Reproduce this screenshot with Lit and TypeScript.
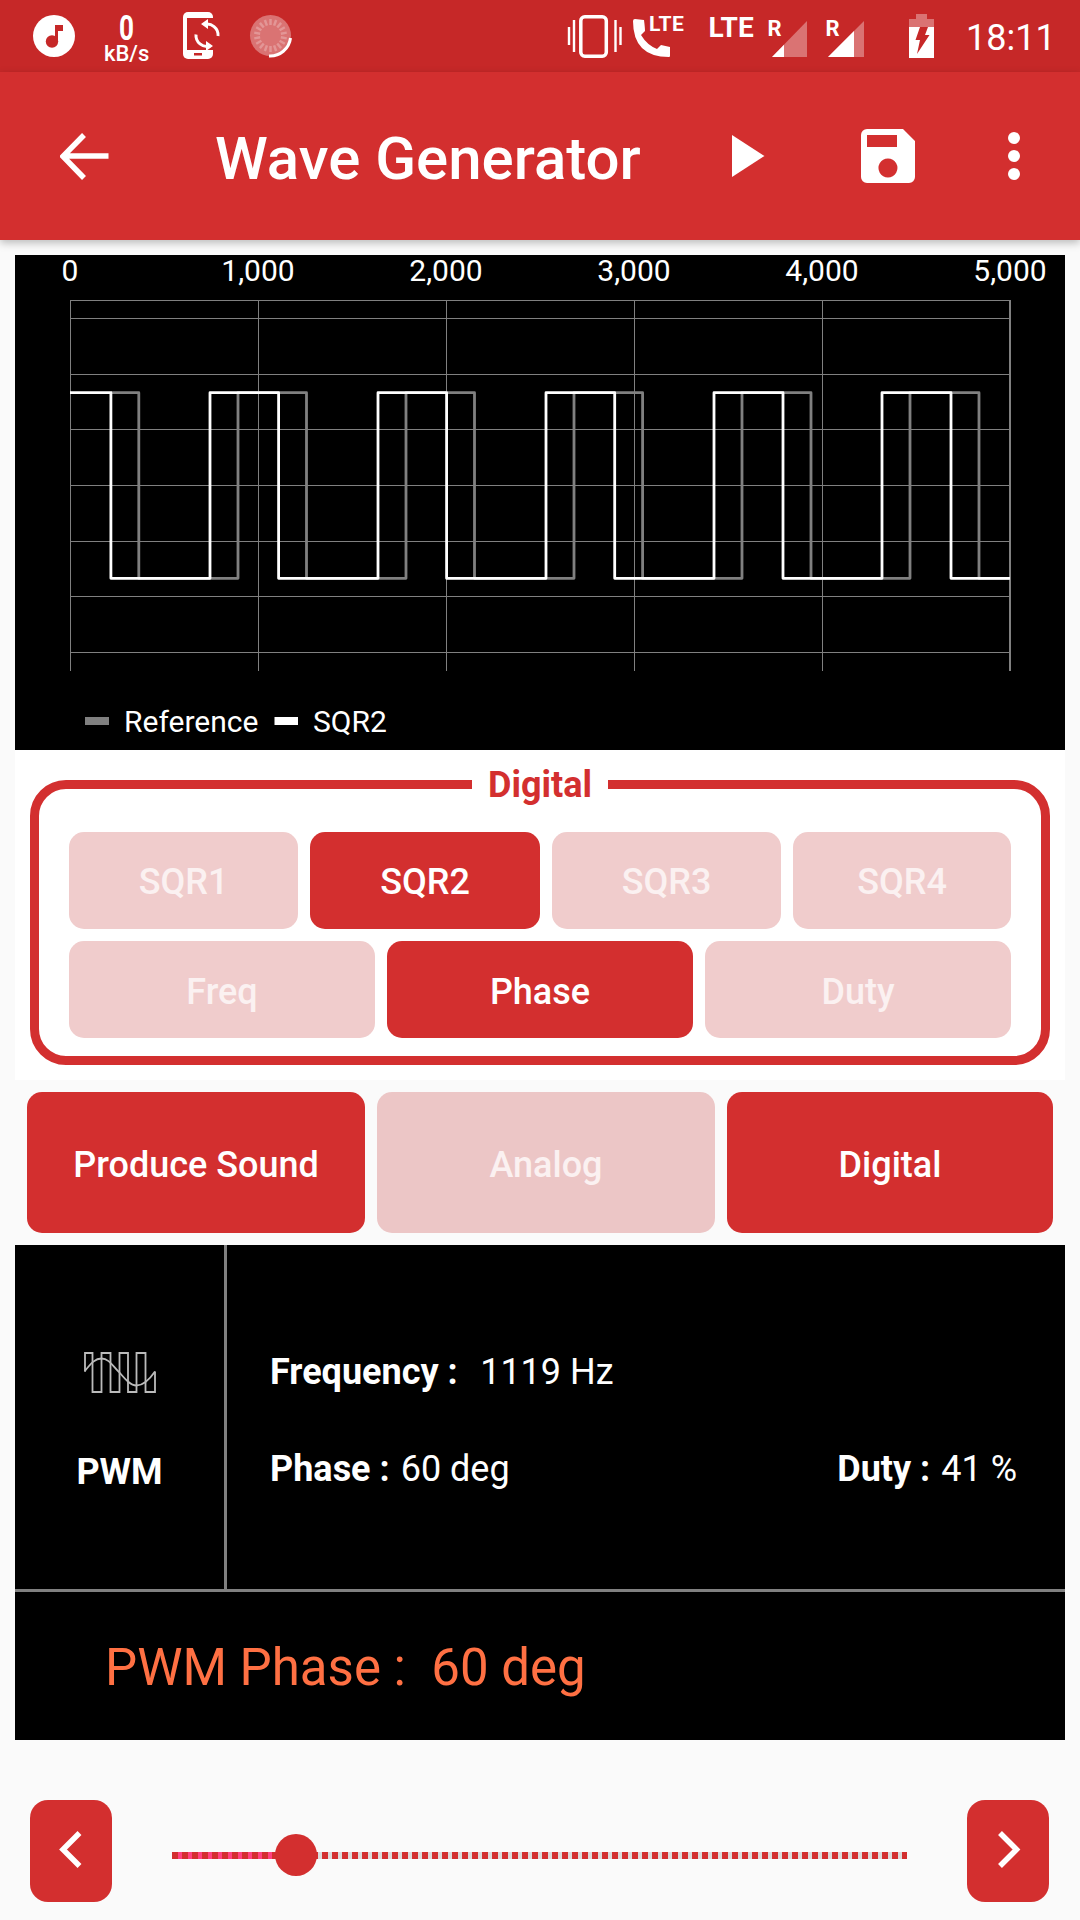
import { LitElement, html, css, svg } from "lit";
import { customElement } from "lit/decorators.js";

const WHITE = [70,110.9,210,278.6,378,446.6,546,614.7,714,783,882,951,1010];
const GRAY = [110.9,138.8,238,306.5,406,474.5,574,642.6,742,811,910,979,1010];
const HI = 392.7, LO = 578.3;

function wave(xs: number[]) {
  let high = true;
  let d = `M${xs[0]} ${HI}`;
  for (let i = 1; i < xs.length; i++) {
    d += ` H${xs[i]}`;
    if (i < xs.length - 1) { high = !high; d += ` V${high ? HI : LO}`; }
  }
  return d;
}

const H_LINES = [318.3,374.3,429.3,485.3,541.3,596.3,652.3];
const V_LINES = [70,258,446,634,822];
const X_LABELS = ["0","1,000","2,000","3,000","4,000","5,000"];
const TICKS = Array.from({ length: 18 }, (_, i) => (i * 360) / 18);

@customElement("app-root")
export class AppRoot extends LitElement {
  static styles = css`
    :host { display: block; width: 1080px; height: 1920px; background: #fafafa; overflow: hidden; font-family: Roboto, "Liberation Sans", sans-serif; color: #fff; }
    svg { display: block; flex: none; }
    .status { height: 72px; background: #c62828; display: flex; padding-left: 33px; box-sizing: border-box; }
    .status text { font-family: Roboto, "Liberation Sans", sans-serif; fill: #fff; }
    .push-right { margin-left: auto; }
    .toolbar { height: 168px; background: #d32f2f; display: flex; box-shadow: 0 3px 8px rgba(0,0,0,.25); position: relative; padding-left: 60px; box-sizing: border-box; align-items: flex-start; }
    .title { flex: none; width: 517px; font-size: 60px; font-weight: 500; line-height: 173px; margin-left: 106px; white-space: nowrap; height: 168px; }
    .save { margin-left: 96px; }
    .dots { margin-left: 93px; }
    .main { padding: 15px 15px 0; }
    .chart { background: #000; height: 495px; }
    .chart text { font-family: Roboto, "Liberation Sans", sans-serif; fill: #fff; font-size: 30px; }
    .axis { height: 45px; display: flex; gap: 88px; padding-left: 5px; font-size: 30px; line-height: 32px; }
    .axis span { width: 100px; flex: none; text-align: center; }
    .panel { background: #fff; height: 330px; padding: 30px 15px 15px; box-sizing: border-box; }
    .group { border: 9px solid #d32f2f; border-radius: 36px; height: 285px; box-sizing: border-box; padding: 43px 30px 18px; position: relative; display: flex; flex-direction: column; gap: 12px; }
    .legend { position: absolute; top: -25px; left: 0; right: 0; text-align: center; pointer-events: none; }
    .legend span { display: inline-block; background: #fff; padding: 0 16px; color: #d32f2f; font-size: 36px; font-weight: 700; line-height: 42px; }
    .row4, .row3, .mode { display: grid; }
    .row4 { grid-template-columns: 229px 230px 229px 218px; gap: 12px; }
    .row3 { grid-template-columns: repeat(3, 1fr); gap: 12px; }
    .btn { height: 97px; box-sizing: border-box; padding-top: 2px; border-radius: 15px; background: #f0cccc; color: #fbf1f1; display: flex; align-items: center; justify-content: center; font-size: 36px; font-weight: 500; }
    .row3 .btn { padding-top: 4px; }
    .btn.on { background: #d32f2f; color: #fff; }
    .mode { grid-template-columns: 338px 338px 326px; gap: 12px; margin: 12px 0 12px 12px; }
    .mode .btn { height: 141px; padding-top: 4px; background: #ecc6c6; }
    .mode .btn.on { background: #d32f2f; }
    .black { background: #000; height: 495px; display: flex; flex-direction: column; }
    .top { height: 347px; border-bottom: 3px solid #808080; box-sizing: border-box; display: flex; }
    .wave { width: 212px; border-right: 3px solid #808080; box-sizing: border-box; display: flex; flex-direction: column; align-items: center; padding-top: 107px; }
    .wave-name { font-size: 36px; font-weight: 700; line-height: 40px; margin-top: 59px; }
    .info { flex: 1; padding: 107px 48px 0 43px; display: flex; flex-direction: column; gap: 57px; font-size: 36px; line-height: 40px; }
    .line { display: flex; white-space: pre; }
    .line b { font-weight: 700; }
    .line .val { margin-left: 22.500px; }
    .line .val.near { margin-left: 11px; }
    .line .end { margin-left: auto; display: flex; }
    .readout { flex: 1; display: flex; align-items: center; padding: 2px 0 0 90px; color: #ff7043; font-size: 51px; white-space: pre; }
    .nav { display: flex; padding: 60px 0 0 30px; align-items: flex-start; }
    .nav-btn { width: 82px; height: 102px; border-radius: 18px; background: #d32f2f; flex: none; }
    .slider { width: 735px; height: 7px; margin: 52px 60px 0; position: relative; flex: none; background: repeating-linear-gradient(90deg, #d32f2f 0 6px, transparent 6px 10px), linear-gradient(90deg, #ff4081 0 124px, #dcdcdc 124px); }
    .thumb { position: absolute; top: -18px; left: 103px; width: 42px; height: 42px; border-radius: 50%; background: #d32f2f; }
  `;

  private statusLeft() {
    return html`
      <svg width="42" height="72" viewBox="33 0 42 72">
        <circle cx="54" cy="36" r="21" fill="#fff"/>
        <circle cx="52" cy="41.5" r="6.2" fill="#c62828"/>
        <path d="M55 25H63V31H58V42H55Z" fill="#c62828"/>
      </svg>
      <svg width="46" height="72" viewBox="103 0 46 72" style="margin-left:28px">
        <text x="119" y="40" font-size="35" font-weight="700" textLength="15" lengthAdjust="spacingAndGlyphs">0</text>
        <text x="104" y="60.5" font-size="22" font-weight="500">kB/s</text>
      </svg>
      <svg width="38" height="72" viewBox="183 0 38 72" style="margin-left:34px">
        <rect x="183" y="12" width="30" height="47" rx="5" fill="#fff"/>
        <rect x="187" y="18" width="27" height="32" fill="#c62828"/>
        <rect x="194" y="53" width="8" height="2.5" fill="#c62828"/>
        <path d="M204 24.5A11 11 0 0 1 218 36M210 46A11 11 0 0 1 196 34.5" fill="none" stroke="#fff" stroke-width="3"/>
        <path d="M208 19V29L201 24ZM206 41V51L213 46Z" fill="#fff"/>
      </svg>
      <svg width="44" height="72" viewBox="248 0 44 72" style="margin-left:28px">
        <circle cx="269.5" cy="35.5" r="20.5" fill="#fff" opacity=".35"/>
        ${TICKS.map((a) => svg`<line x1="269.5" y1="19" x2="269.5" y2="25" stroke="#fff" stroke-opacity=".25" stroke-width="2.5" transform="rotate(${a} 269.5 35.5)"/>`)}
        <path d="M289.5 38A20.5 20.5 0 0 1 268 56" fill="none" stroke="#fff" stroke-width="3"/>
      </svg>
    `;
  }

  private statusRight() {
    return html`
      <svg class="push-right" width="55" height="72" viewBox="567 0 55 72">
        <rect x="580.8" y="16.8" width="25.5" height="39.5" rx="4" fill="none" stroke="#fff" stroke-width="3.5"/>
        <path d="M569 27V45M574 20V52M615.500 20V52M620.500 27V45" stroke="#fff" stroke-width="2.4" fill="none"/>
      </svg>
      <svg width="56" height="72" viewBox="632 0 56 72" style="margin-left:10px">
        <path d="M635 19L644 20Q645 28 645 31L641 35Q647 45 657 49L661 45L670 47V56Q670 57 669 57Q633 57 633 21Q633 19 635 19Z" fill="#fff"/>
        <text x="649" y="31" font-size="21" font-weight="700" letter-spacing=".5">LTE</text>
      </svg>
      <svg width="50" height="72" viewBox="708 0 50 72" style="margin-left:20px">
        <text x="708.500" y="36.500" font-size="28" font-weight="700">LTE</text>
      </svg>
      <svg width="44" height="72" viewBox="766 0 44 72" style="margin-left:8px">
        <text x="767.500" y="36" font-size="22" font-weight="700">R</text>
        <path d="M772 57L807 21V57Z" fill="#fff" fill-opacity=".35"/>
        <path d="M772 57L784 44.700V57Z" fill="#fff"/>
      </svg>
      <svg width="42" height="72" viewBox="824 0 42 72" style="margin-left:14px">
        <text x="825.500" y="36" font-size="22" font-weight="700">R</text>
        <path d="M828 57L864 21V57Z" fill="#fff" fill-opacity=".35"/>
        <path d="M828 57L854 31V57Z" fill="#fff"/>
      </svg>
      <svg width="25" height="72" viewBox="909 0 25 72" style="margin-left:43px">
        <path d="M916 14H927V19H934V27H909V19H916Z" fill="#fff" opacity=".35"/>
        <rect x="909" y="27" width="25" height="31" fill="#fff"/>
        <path d="M920 27H928L925 35H929.500L917 54L920 40H915.500Z" fill="#c62828"/>
      </svg>
      <svg width="120" height="72" viewBox="960 0 120 72" style="margin-left:26px">
        <text x="966" y="50" font-size="36">18:11</text>
      </svg>
    `;
  }

  private chart() {
    return html`
      <div class="axis">${X_LABELS.map((t) => html`<span>${t}</span>`)}</div>
      <svg width="1050" height="450" viewBox="15 300 1050 450">
        <g stroke="#808080" stroke-width="1" fill="none">
          <path d="M70 300.500H1010"/>
          ${H_LINES.map((y) => svg`<path d="M70 ${Math.round(y) + 0.5}H1010"/>`)}
          ${V_LINES.map((x) => svg`<path d="M${x + 0.5} 300V671"/>`)}
        </g>
        <path d="M1010 300V671" stroke="#808080" stroke-width="2"/>
        <path d="${wave(GRAY)}" fill="none" stroke="#808080" stroke-width="2.800" stroke-linejoin="round"/>
        <path d="${wave(WHITE)}" fill="none" stroke="#fff" stroke-width="2.800" stroke-linejoin="round"/>
        <rect x="85" y="717" width="24" height="8" fill="#808080"/>
        <text x="124" y="731.500">Reference</text>
        <rect x="274.500" y="717" width="23.500" height="8" fill="#fff"/>
        <text x="313" y="731.500">SQR2</text>
      </svg>
    `;
  }

  render() {
    return html`
      <div class="status">${this.statusLeft()}${this.statusRight()}</div>
      <div class="toolbar">
        <svg width="49" height="168" viewBox="60 72 49 168">
          <path d="M108.500 156H64M84 135L63 156.300L84 178" fill="none" stroke="#fff" stroke-width="5.500"/>
        </svg>
        <div class="title">Wave Generator</div>
        <svg width="33" height="168" viewBox="732 72 33 168">
          <path d="M732 135L764.500 156L732 177Z" fill="#fff"/>
        </svg>
        <svg class="save" width="54" height="168" viewBox="861 72 54 168">
          <path fill-rule="evenodd" fill="#fff" d="M903 129H867A6 6 0 0 0 861 135V177A6 6 0 0 0 867 183H909A6 6 0 0 0 915 177V141ZM867 135H897V147H867ZM888 158.500A9.500 9.500 0 1 1 887.900 158.500Z"/>
        </svg>
        <svg class="dots" width="12" height="168" viewBox="1008 72 12 168">
          <circle cx="1014" cy="138" r="6" fill="#fff"/>
          <circle cx="1014" cy="156" r="6" fill="#fff"/>
          <circle cx="1014" cy="174" r="6" fill="#fff"/>
        </svg>
      </div>
      <div class="main">
        <div class="chart">${this.chart()}</div>
        <div class="panel">
          <div class="group">
            <div class="legend"><span>Digital</span></div>
            <div class="row4">
              <div class="btn">SQR1</div>
              <div class="btn on">SQR2</div>
              <div class="btn">SQR3</div>
              <div class="btn">SQR4</div>
            </div>
            <div class="row3">
              <div class="btn">Freq</div>
              <div class="btn on">Phase</div>
              <div class="btn">Duty</div>
            </div>
          </div>
        </div>
        <div class="mode">
          <div class="btn on">Produce Sound</div>
          <div class="btn">Analog</div>
          <div class="btn on">Digital</div>
        </div>
        <div class="black">
          <div class="top">
            <div class="wave">
              <svg width="72" height="41" viewBox="84.500 1352.500 72 41">
                <path d="M85.500 1372V1353.500H93V1392.500H102V1353.500H111V1392.500H120V1353.500H128.500V1392.500H137V1353.500H146V1392.500H155.500V1372" fill="none" stroke="#bbb" stroke-width="1.800"/>
                <path d="M85 1372C92 1363 96 1359 102 1359C110 1359 114 1368 120 1373C126 1380 131 1386 137 1386C144 1386 150 1380 155.500 1372" fill="none" stroke="#bbb" stroke-width="1.800"/>
              </svg>
              <div class="wave-name">PWM</div>
            </div>
            <div class="info">
              <div class="line"><b>Frequency :</b><span class="val">1119 Hz</span></div>
              <div class="line"><b>Phase :</b><span class="val near">60 deg</span><span class="end"><b>Duty :</b><span class="val near">41 %</span></span></div>
            </div>
          </div>
          <div class="readout">PWM Phase :  60 deg</div>
        </div>
      </div>
      <div class="nav">
        <div class="nav-btn">
          <svg width="82" height="102" viewBox="0 0 82 102"><path d="M49.500 33L33 49.500L49.500 66" fill="none" stroke="#fff" stroke-width="5.500"/></svg>
        </div>
        <div class="slider"><div class="thumb"></div></div>
        <div class="nav-btn">
          <svg width="82" height="102" viewBox="0 0 82 102"><path d="M33 33L49.500 49.500L33 66" fill="none" stroke="#fff" stroke-width="5.500"/></svg>
        </div>
      </div>
    `;
  }
}
